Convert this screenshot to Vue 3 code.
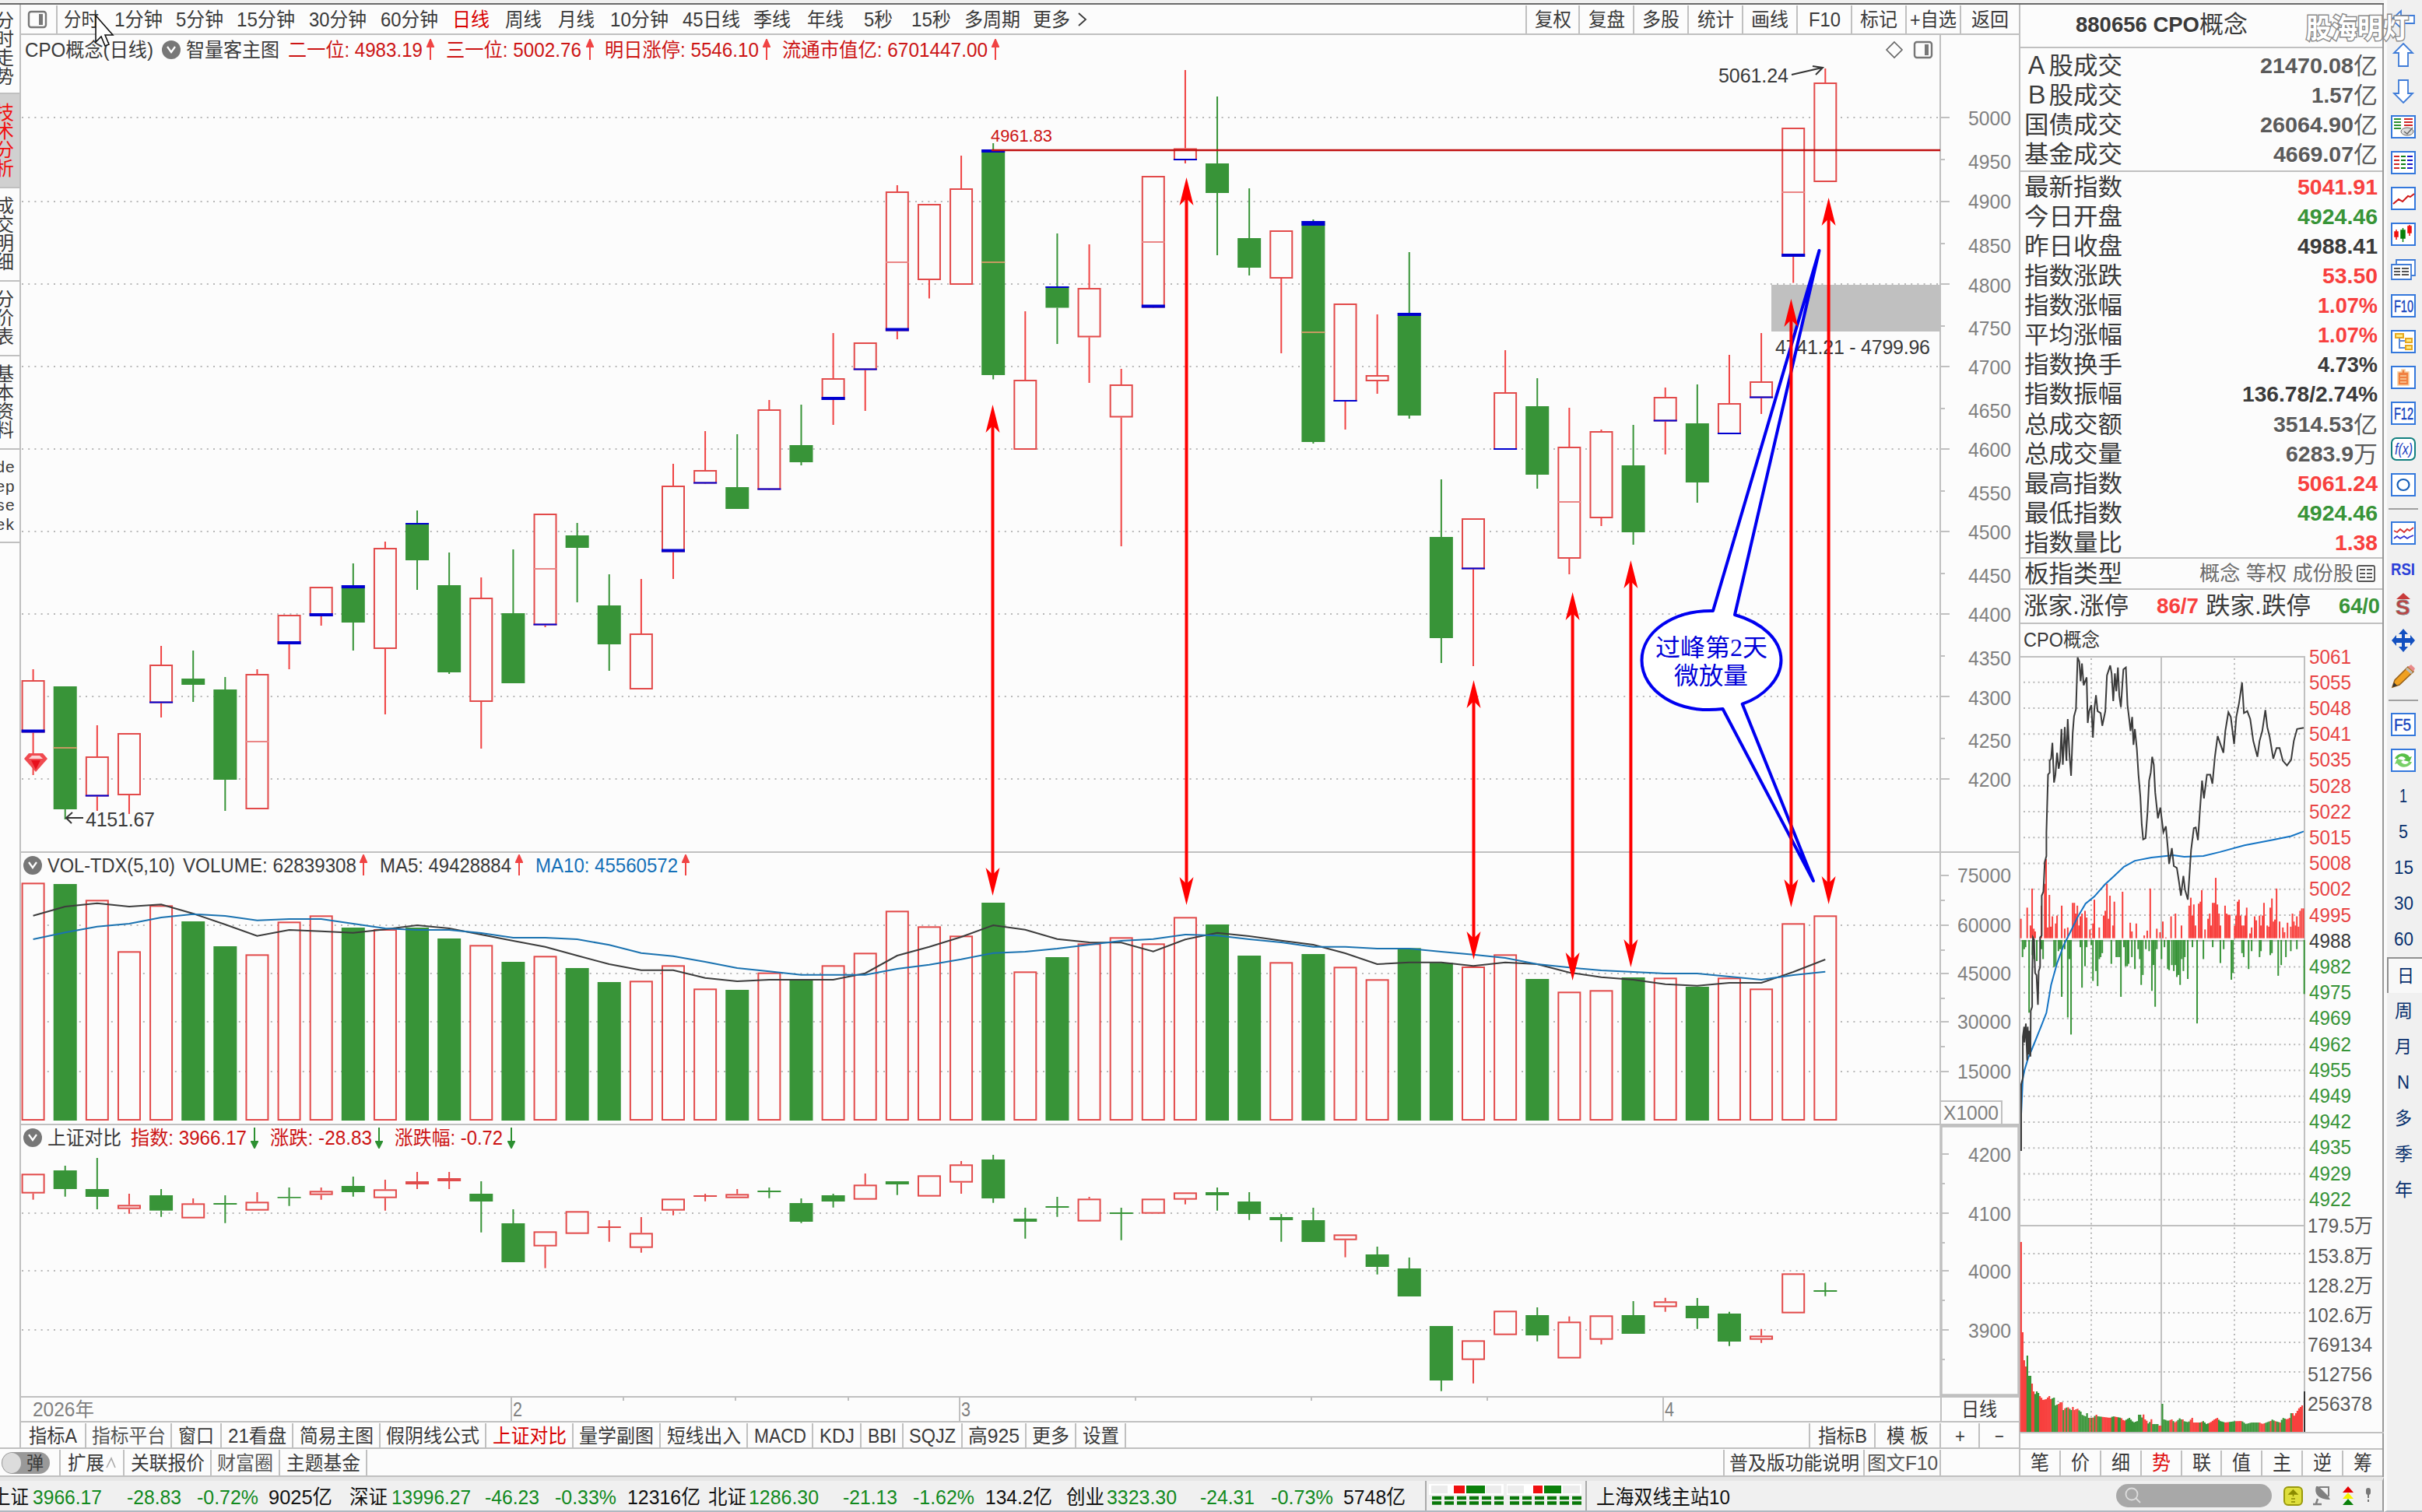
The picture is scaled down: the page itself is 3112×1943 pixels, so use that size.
<script setup>
import { h } from 'vue'

const FONT = '"Liberation Sans", "Noto Sans CJK SC", sans-serif'
const INK = '#3a3a3a'
const RED = '#cc1414'
const BLUE = '#1470b8'

// One line of text, fitted to an exact width and centred on its box height.
const Fit = (p) => {
  const s = p.s || 25
  const H = p.h || 32
  return h('svg', { class: 'fit', width: p.w, height: H }, [
    h('text', {
      x: 0, y: H / 2 + s * 0.365, fill: p.c || INK, 'font-size': s,
      'font-family': p.f || FONT, 'font-weight': p.b ? 700 : 400,
      textLength: p.w, lengthAdjust: 'spacingAndGlyphs'
    }, p.t)
  ])
}
Fit.props = ['t', 'w', 's', 'c', 'b', 'h', 'f']

// Turns start/end positions into gaps between neighbours.
const spread = (from, items) => {
  let at = from
  return items.map((it) => {
    const ml = it.x - at
    at = it.e
    return { ...it, ml, w: it.e - it.x }
  })
}

const periods = spread(74, [
  ['分时', 82, 127], ['1分钟', 147, 209], ['5分钟', 226, 287], ['15分钟', 304, 379], ['30分钟', 397, 471],
  ['60分钟', 489, 563], ['日线', 581, 629], ['周线', 649, 696], ['月线', 717, 764], ['10分钟', 784, 859],
  ['45日线', 877, 951], ['季线', 968, 1016], ['年线', 1037, 1084], ['5秒', 1110, 1147], ['15秒', 1171, 1222],
  ['多周期', 1239, 1311], ['更多', 1327, 1375]
].map(([t, x, e]) => ({ t, x, e })))

const tools = [
  ['复权', 68, 47], ['复盘', 70, 47], ['多股', 70, 48], ['统计', 70, 47], ['画线', 70, 48],
  ['F10', 70, 41], ['标记', 70, 48], ['+自选', 70, 60], ['返回', 76, 48]
]

const side = [
  { t: '分时走势', h: 115 }, { t: '技术分析', h: 121, on: true }, { t: '成交明细', h: 120 },
  { t: '分价表', h: 96 }, { t: '基本资料', h: 120 }
]

const head1 = spread(233, [
  { t: '智量客主图', x: 239, e: 359 },
  { t: '二一位: 4983.19', x: 370, e: 543, c: RED }, { a: 'up', x: 548, e: 558 },
  { t: '三一位: 5002.76', x: 573, e: 747, c: RED }, { a: 'up', x: 753, e: 763 },
  { t: '明日涨停: 5546.10', x: 777, e: 975, c: RED }, { a: 'up', x: 980, e: 990 },
  { t: '流通市值亿: 6701447.00', x: 1005, e: 1269, c: RED }, { a: 'up', x: 1274, e: 1284 }
])
const head2 = spread(54, [
  { t: 'VOL-TDX(5,10)', x: 61, e: 225 }, { t: 'VOLUME: 62839308', x: 235, e: 458 }, { a: 'up', x: 462, e: 472 },
  { t: 'MA5: 49428884', x: 488, e: 657 }, { a: 'up', x: 662, e: 672 },
  { t: 'MA10: 45560572', x: 688, e: 871, c: BLUE }, { a: 'up', x: 876, e: 886 }
])
const head3 = spread(54, [
  { t: '上证对比', x: 61, e: 156 }, { t: '指数: 3966.17', x: 168, e: 317, c: RED }, { a: 'down', x: 322, e: 332 },
  { t: '涨跌: -28.83', x: 347, e: 478, c: RED }, { a: 'down', x: 482, e: 492 },
  { t: '涨跌幅: -0.72', x: 507, e: 646, c: RED }, { a: 'down', x: 652, e: 662 }
])

const cx = (i) => 42.6 + 41.12 * i

// up, high, top, bottom, low, blue marker thickness, mid line
const daily = [
  [1, 861, 875, 942.5, 997, 4], [0, 883, 883, 1041, 1054, 0, 962], [1, 933, 973, 1024.5, 1043, 2], [1, 943, 943, 1023, 1047],
  [1, 831, 855, 904.5, 923, 2], [0, 837, 873, 881, 903], [0, 871, 887, 1003, 1043], [1, 861, 867, 1041, 1041, 0, 954],
  [1, 791, 791, 829, 861, 4], [1, 755, 755, 793, 805, 4], [0, 725, 753, 801, 837, 4], [1, 697, 705, 835, 919],
  [0, 657, 673, 721, 759, 2], [0, 711, 753, 865, 867], [1, 743, 769, 903, 963], [0, 707, 789, 879, 879],
  [1, 661, 661, 804.5, 807, 2, 732], [0, 673, 689, 705, 775], [0, 739, 779, 829, 863], [1, 745, 815, 887, 887],
  [1, 597, 625, 710.5, 745, 4], [1, 555, 605, 622.5, 622, 2], [0, 559, 627, 655, 655], [1, 515, 527, 630.5, 630, 2],
  [0, 521, 573, 595, 599], [1, 429, 487, 515, 547, 4], [1, 441, 441, 476.5, 529, 2], [1, 239, 247, 426.5, 437, 4, 338],
  [1, 263, 263, 361, 384.5], [1, 201, 243, 367, 367], [0, 185, 193, 483, 488.5, 4, 338], [1, 401, 489, 579, 579],
  [0, 301, 369, 396.5, 443, 2], [1, 315, 371, 434.5, 493], [1, 475, 495, 537.5, 703], [1, 227, 227, 396.5, 396, 4, 312],
  [1, 91, 191.5, 207, 211, 2], [0, 125, 211, 249, 329], [0, 243, 307, 345, 355], [1, 297, 297, 359, 455],
  [0, 283, 285, 569, 571, 6, 428], [1, 391, 391, 517, 553, 2], [1, 405, 483, 491, 507], [0, 325, 403, 535, 539, 4],
  [0, 617, 691, 821, 853], [1, 667, 667, 732.5, 857, 2], [1, 451, 505, 579, 579, 2], [0, 487, 523, 611, 629],
  [1, 525, 575, 719, 739, 0, 646], [1, 553, 555, 667, 677], [0, 547, 599, 685, 701], [1, 499, 511, 542.5, 585, 2],
  [0, 495, 545, 621, 647], [1, 457, 519, 559, 559, 2], [1, 429, 491, 512.5, 533, 2], [1, 165, 165, 331, 364.5, 4, 248],
  [1, 89, 107, 235, 235]
].map(([u, hi, t, b, lo, m = 0, mid = 0], i) => ({ u, hi, t, b, lo, m, mid, x: cx(i) }))

const vols = [
  [1, 166], [0, 171], [1, 232], [1, 430], [1, 253], [0, 315], [0, 411], [1, 442], [1, 316], [1, 292], [0, 339], [1, 345],
  [0, 339], [0, 381], [1, 406], [0, 471], [1, 448], [0, 495], [0, 549], [1, 544], [1, 484], [1, 574], [0, 579], [1, 512],
  [0, 540], [1, 484], [1, 436], [1, 274], [1, 334], [1, 370], [0, 243], [1, 508], [0, 453], [1, 400], [1, 376], [1, 400],
  [1, 298], [0, 327], [0, 447], [1, 472], [0, 441], [1, 490], [1, 538], [0, 418], [0, 475], [1, 489], [1, 442], [0, 537],
  [1, 586], [1, 580], [0, 531], [1, 532], [0, 567], [1, 532], [1, 574], [1, 322], [1, 292]
].map(([u, v], i) => ({ u, x: cx(i), y: 1080 + v / 3 }))

const curve = (vals) => vals.map((v, i) => `${cx(i).toFixed(1)},${(1080 + v / 3).toFixed(1)}`).join(' ')
const ma5 = curve([293, 258, 245, 258, 250, 285, 327, 371, 348, 353, 359, 346, 330, 342, 366, 390, 413, 447, 480, 503, 503, 533, 546, 540, 540, 540, 515, 447, 413, 375, 330, 347, 383, 396, 397, 431, 385, 359, 372, 389, 405, 438, 480, 473, 473, 487, 473, 480, 512, 530, 540, 557, 563, 552, 552, 510, 462])
const ma10 = curve([384, 358, 335, 324, 300, 287, 294, 311, 306, 306, 324, 342, 348, 348, 360, 378, 378, 384, 406, 437, 449, 471, 495, 508, 521, 521, 521, 498, 482, 461, 437, 432, 420, 405, 390, 383, 366, 370, 384, 396, 413, 413, 420, 420, 432, 443, 456, 480, 493, 504, 510, 516, 516, 528, 540, 522, 509])

// kind (1 hollow, 0 falling, 2 solid rising), high, top, bottom, low
const index = [
  [1, 238, 238, 314, 338], [0, 207, 225, 297, 326], [0, 177, 297, 327, 375], [1, 315, 358, 374, 392], [0, 297, 321, 380, 404],
  [1, 333, 352, 410, 410], [0, 321, 351, 357, 428], [1, 309, 346, 380, 380], [0, 291, 327, 332, 362], [1, 291, 304, 320, 338],
  [0, 249, 285, 309, 326], [1, 261, 298, 332, 380], [2, 231, 267, 279, 297], [2, 231, 255, 267, 297], [0, 267, 315, 345, 464],
  [0, 375, 429, 579, 579], [1, 460, 460, 518, 602], [1, 382, 382, 470, 470], [2, 417, 441, 447, 500], [1, 405, 466, 524, 542],
  [1, 334, 334, 380, 398], [2, 315, 321, 327, 344], [1, 297, 316, 332, 332], [0, 291, 303, 309, 332], [0, 333, 351, 423, 428],
  [0, 315, 321, 345, 368], [1, 237, 280, 338, 338], [0, 267, 267, 279, 320], [1, 244, 244, 326, 326], [1, 189, 202, 272, 315],
  [0, 165, 183, 333, 350], [0, 369, 411, 423, 488], [0, 327, 363, 369, 404], [1, 327, 334, 422, 422], [0, 369, 387, 393, 494],
  [1, 334, 334, 392, 392], [1, 310, 310, 338, 356], [0, 291, 309, 321, 380], [0, 309, 345, 393, 416], [0, 393, 405, 417, 500],
  [0, 369, 417, 501, 501], [1, 472, 472, 494, 560], [0, 519, 549, 597, 626], [0, 561, 603, 711, 711], [0, 825, 825, 1035, 1076],
  [1, 880, 880, 956, 1046], [1, 766, 766, 860, 860], [0, 753, 783, 861, 884], [1, 788, 808, 950, 950], [1, 784, 784, 878, 896],
  [0, 729, 783, 855, 855], [1, 716, 730, 752, 770], [0, 717, 747, 795, 836], [0, 770, 777, 885, 902], [1, 836, 862, 878, 890],
  [1, 622, 622, 776, 776], [0, 657, 687, 693, 710]
].map(([u, ...v], i) => {
  const [hi, t, b, lo] = v.map((n) => 1430 + n / 3)
  return { u, hi, t, b, lo, x: cx(i) }
})

const axis1 = [
  [5000, 152, 153], [4950, 206, 209], [4900, 260, 260], [4850, 314, 317], [4800, 366, 368], [4750, 420, 423], [4700, 472, 473],
  [4650, 526, 529], [4600, 578, 579], [4550, 632, 635], [4500, 684, 685], [4450, 738, 741], [4400, 790, 791], [4350, 844, 847],
  [4300, 896, 898], [4250, 950, 953], [4200, 1002, 1003]
].map(([n, y, ty], i) => ({ n, y, ty, major: i % 2 === 0 }))
const axis2 = [[75000, 1126], [60000, 1190], [45000, 1252], [30000, 1314], [15000, 1378]]
const axis3 = [[4200, 1484], [4100, 1560], [4000, 1634], [3900, 1710]]

const arrows = [
  [1275.5, 520, 1151], [1524.5, 228, 1163], [1893.5, 874, 1233], [2020.6, 761, 1260],
  [2095.4, 720, 1243], [2301.4, 384, 1166], [2349.6, 254, 1162]
]
const tip = (x, y, d) => `M${x},${y} L${x + 9},${y + 36 * d} L${x},${y + 27 * d} L${x - 9},${y + 36 * d} Z`

const tabs = [
  ['指标A', 84, 62], ['指标平台', 110, 95], ['窗口', 64, 46], ['21看盘', 92, 75], ['简易主图', 112, 95], ['假阴线公式', 136, 120],
  ['上证对比', 112, 95], ['量学副图', 112, 96], ['短线出入', 112, 95], ['MACD', 84, 67], ['KDJ', 62, 45], ['BBI', 54, 37],
  ['SQJZ', 76, 60], ['高925', 82, 66], ['更多', 64, 48], ['设置', 64, 47]
]
const tabsRight = [['指标B', 84, 63], ['模 板', 84, 54], ['+', 50, 13], ['−', 50, 12]]
const links = [['扩展', 82, 47], ['关联报价', 112, 95], ['财富圈', 88, 72], ['主题基金', 112, 95]]

const K = '#111'
const G = '#128a1e'
const quotes = spread(0, [
  ['上证', -10, 37, K], ['3966.17', 42, 131, G], ['-28.83', 163, 233, G], ['-0.72%', 253, 332, G], ['9025亿', 345, 427, K],
  ['深证', 449, 498, K], ['13996.27', 503, 605, G], ['-46.23', 623, 693, G], ['-0.33%', 713, 792, G], ['12316亿', 806, 900, K],
  ['北证', 910, 959, K], ['1286.30', 962, 1052, G], ['-21.13', 1083, 1153, G], ['-1.62%', 1173, 1252, G], ['134.2亿', 1266, 1352, K],
  ['创业', 1370, 1419, K], ['3323.30', 1422, 1512, G], ['-24.31', 1542, 1612, G], ['-0.73%', 1633, 1713, G], ['5748亿', 1726, 1806, K]
].map(([t, x, e, c]) => ({ t, x, e, c })))

const R = '#f8403e'
const GN = '#389438'
const GR = '#5a5a5a'
const turnover = [
  ['Ａ股成交', '21470.08', 120, GR, '亿'], ['Ｂ股成交', '1.57', 54, GR, '亿'],
  ['国债成交', '26064.90', 120, GR, '亿'], ['基金成交', '4669.07', 103, GR, '亿']
]
const stats = [
  ['最新指数', '5041.91', 103, R], ['今日开盘', '4924.46', 103, GN], ['昨日收盘', '4988.41', 103, INK], ['指数涨跌', '53.50', 71, R],
  ['指数涨幅', '1.07%', 77, R], ['平均涨幅', '1.07%', 77, R], ['指数换手', '4.73%', 77, INK], ['指数振幅', '136.78/2.74%', 174, INK],
  ['总成交额', '3514.53', 103, GR, '亿'], ['总成交量', '6283.9', 87, GR, '万'], ['最高指数', '5061.24', 103, R],
  ['最低指数', '4924.46', 103, GN], ['指数量比', '1.38', 55, R]
]

// Intraday chart
const mx = (v) => 2560 + v / 2.84
const my = (v) => 800 + v / 1.96
const path = (s) => s.split(' ').map((p) => { const [a, b] = p.split(','); return `${mx(+a).toFixed(1)},${my(+b).toFixed(1)}` }).join(' ')
const price = path('105,1333 105,1165 111,1150 111,1045 116,1020 117,1060 122,1012 127,1105 129,1020 132,1090 134,1030 139,1095 140,980 145,970 145,900 148,795 152,800 156,885 161,890 166,965 169,880 174,870 174,795 180,790 180,690 186,680 191,605 197,590 197,530 203,385 209,380 209,350 214,345 219,305 225,405 230,385 236,330 242,370 247,350 252,270 257,360 264,265 270,350 275,245 281,330 287,388 293,280 298,238 305,220 311,90 317,100 322,150 327,105 333,160 344,140 348,255 353,225 361,210 367,292 372,220 378,185 384,225 395,230 401,262 412,225 418,135 430,110 435,130 441,200 447,130 452,175 458,115 463,185 469,215 478,120 487,115 493,210 500,250 504,275 510,240 515,310 520,270 527,320 533,385 540,440 545,510 550,548 559,545 566,480 572,400 578,380 583,340 589,360 594,430 604,495 613,468 624,530 633,515 640,570 645,610 655,570 662,615 673,620 680,650 688,690 697,640 703,675 713,700 718,650 725,575 735,520 742,518 750,550 757,480 765,400 772,445 783,385 795,385 803,408 812,340 822,288 833,310 843,330 850,275 861,228 870,240 882,308 890,240 900,205 911,153 918,230 930,225 941,245 952,300 967,340 975,300 985,275 996,222 1003,265 1012,290 1025,345 1037,318 1048,318 1060,350 1075,362 1090,348 1100,300 1112,270 1136,267')
const average = path('105,1240 111,1150 118,1128 130,1100 145,1075 160,1050 180,1015 197,985 214,915 236,860 260,815 282,785 310,745 340,710 372,692 410,662 445,640 480,617 520,602 580,594 660,588 700,592 770,590 830,580 920,563 1020,550 1090,540 1136,528')
const pairs = (s) => s.split(' ').map((p) => p.split(':').map(Number))
const buys = pairs('104:748 127:720 139:765 145:672 151:773 156:780 179:715 191:660 196:598 202:770 208:688 213:768 219:742 231:760 236:740 253:715 264:773 275:770 293:708 299:708 304:735 310:715 316:765 321:742 327:735 338:728 344:745 356:775 367:760 372:700 390:770 406:740 412:728 418:660 424:748 429:690 440:765 445:705 475:680 503:758 509:780 525:760 554:790 565:778 576:672 600:773 612:782 622:755 633:795 652:742 668:735 690:765 718:715 724:695 730:740 735:712 741:765 753:710 759:705 764:676 776:775 787:748 793:735 798:765 804:708 810:708 815:645 821:712 827:735 832:765 849:715 855:735 861:738 866:738 884:765 889:740 895:705 900:700 906:740 911:765 917:765 923:740 928:720 940:785 946:770 957:742 963:752 975:740 980:765 986:740 991:708 1003:765 1009:768 1014:720 1020:697 1026:755 1031:750 1037:672 1048:755 1060:770 1066:782 1077:758 1089:768 1095:735 1100:755 1106:765 1111:742 1117:768 1123:728 1129:722 1135:722')
const sells = pairs('110:845 116:825 121:820 134:985 146:840 152:850 162:855 179:825 185:850 225:870 231:868 241:830 247:825 253:945 264:825 275:997 281:850 287:1040 321:820 327:922 338:868 344:820 361:815 367:905 378:880 384:918 390:850 395:845 401:835 434:862 452:845 458:845 464:845 469:945 480:820 486:868 492:868 497:862 509:845 520:875 532:825 538:850 543:915 549:890 560:825 572:830 582:930 588:865 594:970 600:825 617:850 628:820 640:875 645:878 655:865 662:880 668:865 673:895 679:890 685:915 691:850 697:880 702:845 713:900 730:820 747:1012 770:850 804:820 832:860 844:825 872:902 878:885 911:835 917:845 935:875 946:830 975:845 980:830 1014:840 1020:835 1043:892 1054:865 1071:845 1089:830 1111:825 1138:938')

const envelope = pairs('104:171 110:519 116:627 122:651 127:609 133:687 139:687 145:717 150:747 156:757 162:747 168:753 174:765 185:780 196:777 207:765 213:777 224:771 230:801 242:795 250:789 258:819 264:813 275:807 287:819 293:807 300:819 310:813 321:825 327:837 338:843 344:831 350:849 367:849 378:837 384:843 430:849 440:843 470:849 480:861 500:849 515:867 530:861 538:837 545:849 554:831 560:855 570:873 583:849 588:873 605:873 612:879 617:879 622:795 628:855 640:861 655:855 665:867 675:860 685:849 692:855 700:862 715:866 729:849 735:867 760:867 770:861 780:873 795:867 810:855 821:849 830:861 850:867 885:862 910:861 925:873 945:867 975:867 985:873 1000:867 1015:861 1020:855 1030:861 1050:867 1060:849 1075:855 1085:849 1093:831 1100:843 1111:825 1122:807 1130:801')
const greens = pairs('124:142 153:172 219:240 258:262 270:275 282:290 313:352 361:365 372:376 384:402 432:448 455:470 486:550 566:576 582:608 616:648 658:662 672:690 697:718 735:740 757:762 768:790 825:845 862:885 912:972 995:1015 1020:1030 1038:1045 1055:1070 1085:1092')
const minutes = Array.from({ length: 180 }, (_, i) => {
  const x = 104.5 + i * 5.73
  let k = envelope.findIndex(([ex]) => ex > x)
  if (k < 1) k = k < 0 ? envelope.length - 1 : 1
  const [a, b] = [envelope[k - 1], envelope[k]]
  const near = x - a[0] < b[0] - x ? a : b
  const v = b[0] - a[0] < 9 ? near[1] : a[1] + (b[1] - a[1]) * (x - a[0]) / (b[0] - a[0])
  return { x: mx(x), y: 1540 + v / 3, g: greens.some(([s, e]) => x >= s && x <= e) }
})
const mgrid = Array.from({ length: 21 }, (_, i) => 844.5 + 33.25 * (i + 1)).filter((_, i) => i !== 10)
const scale = [5061, 5055, 5048, 5041, 5035, 5028, 5022, 5015, 5008, 5002, 4995, 4988, 4982, 4975, 4969, 4962, 4955, 4949, 4942, 4935, 4929, 4922]
const vscale = [['179.5万', 1576], ['153.8万', 1615], ['128.2万', 1653], ['102.6万', 1691], ['769134', 1729], ['512756', 1767], ['256378', 1805]]
const views = ['笔', '价', '细', '势', '联', '值', '主', '逆', '筹']

const rail = [
  'left', 'up', 'down', 'sheet', 'table', 'trend', 'kline', 'windows', 'F10', 'tree', 'info', 'F12', 'fx', 'ring', '-',
  'waves', 'RSI', 'S', 'move', 'pencil', '-', 'F5', 'refresh'
]
const railText = [['1', 10], ['5', 12], ['15', 25], ['30', 25], ['60', 25], ['日', 22], ['周', 23], ['月', 22], ['N', 16], ['多', 22], ['季', 23], ['年', 23]]
</script>

<template>
  <div class="app">
    <div class="strip"></div>
    <div class="body">
      <div class="work">
        <div class="upper">
          <nav class="side">
            <div v-for="s in side" :key="s.t" class="side-tab" :class="{ on: s.on }" :style="{ height: s.h + 'px' }">
              <span v-for="ch in s.t" :key="ch">{{ ch }}</span>
            </div>
            <div class="side-tab latin"><span>de</span><span>ep</span><span>se</span><span>ek</span></div>
          </nav>

          <div class="main">
            <header class="toolbar">
              <div class="dock">
                <svg width="26" height="24" viewBox="0 0 26 24"><rect x="2" y="2" width="22" height="20" rx="3" fill="none" stroke="#777" stroke-width="2.4" /><rect x="15" y="5" width="5" height="14" fill="#777" /></svg>
              </div>
              <Fit v-for="p in periods" :key="p.t" :t="p.t" :w="p.w" :c="p.t === '日线' ? '#d80000' : INK" :style="{ marginLeft: p.ml + 'px' }" />
              <svg class="chev" width="14" height="20" viewBox="0 0 14 20"><path d="M2 2l9 8-9 8" fill="none" stroke="#3a3a3a" stroke-width="1.8" /></svg>
              <div class="tools">
                <div v-for="t in tools" :key="t[0]" class="tool" :style="{ width: t[1] + 'px' }"><Fit :t="t[0]" :w="t[2]" /></div>
              </div>
            </header>

            <section class="panel">
              <div class="head">
                <Fit class="first" t="CPO概念(日线)" :w="165" />
                <svg class="fold late" width="24" height="24" viewBox="0 0 24 24"><circle cx="12" cy="12" r="12" fill="#777" /><path d="M7 8l5 7 5-7" fill="none" stroke="#fff" stroke-width="2.2" /></svg>
                <template v-for="(p, i) in head1" :key="i">
                  <Fit v-if="p.t" :t="p.t" :w="p.w" :c="p.c" :style="{ marginLeft: p.ml + 'px' }" />
                  <svg v-else width="10" height="28" viewBox="0 0 10 28" :style="{ marginLeft: p.ml + 'px' }"><path d="M5 27V8M5 1L1 10h8z" fill="#f04444" stroke="#f04444" stroke-width="2" /></svg>
                </template>
                <svg class="corner" width="66" height="26" viewBox="0 0 66 26"><path d="M12 3l10 10-10 10L2 13z" fill="none" stroke="#666" stroke-width="1.6" /><rect x="38" y="3" width="22" height="20" rx="3" fill="none" stroke="#777" stroke-width="2.4" /><rect x="51" y="6" width="5" height="14" fill="#777" /></svg>
              </div>
              <svg class="plot" width="2568" height="1012" viewBox="27 84 2568 1012">
                <g class="dots"><path v-for="a in axis1.filter(a => a.major)" :key="a.n" :d="`M28,${a.y}H2491`" /></g>
                <path d="M2493,46V1096" class="axis" />
                <g v-for="a in axis1" :key="a.n">
                  <path class="tick" :d="`M2494,${a.y}h${a.major ? 11 : 5}`" />
                  <text class="num" x="2529" :y="a.ty + 9" textLength="55" lengthAdjust="spacingAndGlyphs">{{ a.n }}</text>
                </g>
                <rect x="2276" y="367" width="217" height="60" fill="#c0c0c0" />
                <g v-for="(c, i) in daily" :key="i">
                  <path :d="`M${c.x},${c.hi}V${c.t}M${c.x},${c.b}V${c.lo}`" :stroke="c.u ? '#f04343' : '#389438'" stroke-width="2" />
                  <rect v-if="c.u" :x="c.x - 14" :y="c.t + 1" width="28" :height="c.b - c.t - 2" class="hollow" />
                  <rect v-else :x="c.x - 15" :y="c.t" width="30" :height="c.b - c.t" class="solid" />
                  <rect v-if="c.m" :x="c.x - 15" :y="c.u ? c.b - c.m : c.t" width="30" :height="c.m" fill="#0000d0" />
                  <path v-if="c.mid" :d="`M${c.x - 15},${c.mid}h30`" :stroke="c.u ? '#ea8585' : '#c69a62'" stroke-width="2" />
                </g>
                <path d="M1274,194H2493" stroke="#c01010" stroke-width="2.4" />
                <text x="1273" y="183" fill="#cc1414" font-size="22" textLength="79" lengthAdjust="spacingAndGlyphs">4961.83</text>
                <text class="note" x="2208" y="107" textLength="90">5061.24</text>
                <path class="pointer" d="M2302,97L2341,88M2329,86L2342,88L2333,97" />
                <text class="note" x="110" y="1063" textLength="89">4151.67</text>
                <path class="pointer" d="M107,1052H85M93,1045L85,1052L92,1059" />
                <g transform="translate(46 980)">
                  <path d="M-15,-4L-9,-11H9L15,-4L0,13Z" fill="#f04a50" /><path d="M-9,-4L-5,-8H5L9,-4Z" fill="#fff" opacity=".75" /><path d="M-6,-2L0,10L6,-2" fill="#e8101c" />
                </g>
                <text class="note" x="2281" y="456" textLength="199">4741.21 - 4799.96</text>
              </svg>
            </section>

            <section class="panel vol">
              <div class="head">
                <svg class="fold" width="24" height="24" viewBox="0 0 24 24"><circle cx="12" cy="12" r="12" fill="#777" /><path d="M7 8l5 7 5-7" fill="none" stroke="#fff" stroke-width="2.2" /></svg>
                <template v-for="(p, i) in head2" :key="i">
                  <Fit v-if="p.t" :t="p.t" :w="p.w" :c="p.c" :style="{ marginLeft: p.ml + 'px' }" />
                  <svg v-else width="10" height="28" viewBox="0 0 10 28" :style="{ marginLeft: p.ml + 'px' }"><path d="M5 27V8M5 1L1 10h8z" fill="#f04444" stroke="#f04444" stroke-width="2" /></svg>
                </template>
              </div>
              <svg class="plot" width="2568" height="315" viewBox="27 1128 2568 315">
                <g class="dots"><path v-for="a in axis2.slice(1)" :key="a[0]" :d="`M28,${a[1]}H2491`" /></g>
                <path d="M2493,1096V1446" class="axis" />
                <g v-for="a in axis2" :key="a[0]">
                  <path class="tick" :d="`M2494,${a[1]}h10`" />
                  <text class="num" x="2515" :y="a[1] + 9" textLength="69" lengthAdjust="spacingAndGlyphs">{{ a[0] }}</text>
                </g>
                <path class="tick" d="M2494,1158h5M2494,1222h5M2494,1284h5M2494,1346h5" />
                <g v-for="(b, i) in vols" :key="i">
                  <rect v-if="b.u" :x="b.x - 14" :y="b.y + 1" width="28" :height="1440 - b.y - 1" class="hollow" />
                  <rect v-else :x="b.x - 15" :y="b.y" width="30" :height="1441 - b.y" class="solid" />
                </g>
                <polyline :points="ma5" fill="none" stroke="#3c3c3c" stroke-width="2" />
                <polyline :points="ma10" fill="none" stroke="#1a72b0" stroke-width="2" />
                <path d="M2494,1416H2572V1446" fill="none" stroke="#c0c0c0" stroke-width="2" />
                <text class="num" x="2497" y="1440" textLength="71" lengthAdjust="spacingAndGlyphs">X1000</text>
              </svg>
            </section>

            <section class="panel idx">
              <div class="head">
                <svg class="fold" width="24" height="24" viewBox="0 0 24 24"><circle cx="12" cy="12" r="12" fill="#777" /><path d="M7 8l5 7 5-7" fill="none" stroke="#fff" stroke-width="2.2" /></svg>
                <template v-for="(p, i) in head3" :key="i">
                  <Fit v-if="p.t" :t="p.t" :w="p.w" :c="p.c" :style="{ marginLeft: p.ml + 'px' }" />
                  <svg v-else width="10" height="28" viewBox="0 0 10 28" :style="{ marginLeft: p.ml + 'px' }"><path d="M5 1v19M5 27L1 19h8z" fill="#2d9032" stroke="#2d9032" stroke-width="2" /></svg>
                </template>
              </div>
              <svg class="plot" width="2568" height="315" viewBox="27 1478 2568 315">
                <g class="dots"><path v-for="a in axis3.slice(1)" :key="a[0]" :d="`M28,${a[1]}H2491`" /></g>
                <rect x="2494" y="1448" width="100" height="346" fill="none" stroke="#c0c0c0" stroke-width="3.5" />
                <g v-for="a in axis3" :key="a[0]">
                  <path class="tick" :d="`M2494,${a[1]}h10`" />
                  <text class="num" x="2529" :y="a[1] + 9.5" textLength="55" lengthAdjust="spacingAndGlyphs">{{ a[0] }}</text>
                </g>
                <path class="tick" d="M2494,1522h5M2494,1598h5M2494,1672h5M2494,1748h5" />
                <g v-for="(c, i) in index" :key="i">
                  <path :d="`M${c.x},${c.hi}V${c.t}M${c.x},${c.b}V${c.lo}`" :stroke="c.u ? '#e84848' : '#389438'" stroke-width="2" />
                  <rect v-if="c.u === 1" :x="c.x - 14" :y="c.t + 1" width="28" :height="c.b - c.t - 2" class="hollow" />
                  <rect v-else :x="c.x - 15" :y="c.t" width="30" :height="c.b - c.t" :fill="c.u ? '#e04c4c' : '#389438'" />
                </g>
              </svg>
            </section>

            <div class="timeline">
              <svg width="2466" height="30" viewBox="27 1798 2466 30">
                <path d="M657,1798V1828M1233,1798V1828M2137,1798V1828M801,1798v4M945,1798v4M1090,1798v4M1459,1798v4M1685,1798v4M1911,1798v4" stroke="#c0c0c0" stroke-width="2" />
                <text class="num" x="42" y="1822" textLength="79" lengthAdjust="spacingAndGlyphs">2026年</text>
                <text class="num" x="659" y="1822" textLength="12" lengthAdjust="spacingAndGlyphs">2</text><text class="num" x="1235" y="1822" textLength="12" lengthAdjust="spacingAndGlyphs">3</text><text class="num" x="2139" y="1822" textLength="12" lengthAdjust="spacingAndGlyphs">4</text>
              </svg>
              <div class="mode"><Fit t="日线" :w="46" /></div>
            </div>
            <div class="row tabs">
              <div v-for="t in tabs" :key="t[0]" class="cell" :style="{ width: t[1] + 'px' }"><Fit :t="t[0]" :w="t[2]" :c="t[0] === '上证对比' ? '#d80000' : t[0] === '指标平台' ? '#555' : INK" /></div>
              <div class="grow"></div>
              <div v-for="t in tabsRight" :key="t[0]" class="cell" :style="{ width: t[1] + 'px' }"><Fit :t="t[0]" :w="t[2]" /></div>
            </div>
          </div>
        </div>

        <div class="row extra">
          <div class="pop cell"><div class="toggle"><i></i><Fit t="弹" :w="22" :h="26" :s="23" /></div></div>
          <div v-for="t in links" :key="t[0]" class="cell" :style="{ width: t[1] + 'px' }">
            <Fit :t="t[0]" :w="t[2]" :c="t[0] === '财富圈' ? '#555' : INK" />
            <svg v-if="t[0] === '扩展'" width="16" height="16" viewBox="0 0 16 16"><path d="M3 14L9 2l5 12" fill="none" stroke="#aaa" stroke-width="1.6" /></svg>
          </div>
          <div class="grow"></div>
          <div class="cell manual"><Fit t="普及版功能说明" :w="167" /></div>
          <div class="cell f10"><Fit t="图文F10" :w="91" c="#555" /></div>
          <div class="cell blank"></div>
        </div>
      </div>

      <aside class="info">
        <h1><Fit t="880656 CPO" :w="159" :s="28" b="1" :h="40" /><Fit t="概念" :w="62" :s="31" :h="40" /></h1>
        <dl class="group g1">
          <div v-for="r in turnover" :key="r[0]" class="stat">
            <dt><Fit :t="r[0]" :w="126" :s="31" :h="38" /></dt>
            <dd><Fit :t="r[1]" :w="r[2]" :c="r[3]" b="1" :s="27" :h="38" /><Fit v-if="r[4]" :t="r[4]" :w="31" :c="r[3]" :s="30" :h="38" /></dd>
          </div>
        </dl>
        <dl class="group g2">
          <div v-for="r in stats" :key="r[0]" class="stat">
            <dt><Fit :t="r[0]" :w="126" :s="31" :h="38" /></dt>
            <dd><Fit :t="r[1]" :w="r[2]" :c="r[3]" b="1" :s="27" :h="38" /><Fit v-if="r[4]" :t="r[4]" :w="31" :c="r[3]" :s="30" :h="38" /></dd>
          </div>
        </dl>
        <div class="stat kind">
          <Fit t="板指类型" :w="126" :s="31" :h="38" />
          <div class="tail"><Fit t="概念 等权 成份股" :w="198" :s="26" c="#6c6c6c" :h="38" />
            <svg width="24" height="22" viewBox="0 0 24 22"><rect x="1" y="1" width="22" height="20" rx="2" fill="none" stroke="#555" stroke-width="1.8" /><path d="M4 6h7M4 11h7M4 16h7M13 6h7M13 11h7M13 16h7" stroke="#555" stroke-width="2" /></svg></div>
        </div>
        <div class="stat breadth">
          <Fit t="涨家.涨停" :w="135" :s="31" :h="40" /><Fit class="b1" t="86/7" :w="54" :s="27" :h="40" b="1" c="#f8403e" />
          <Fit class="b2" t="跌家.跌停" :w="135" :s="31" :h="40" /><Fit class="b3" t="64/0" :w="53" :s="27" :h="40" b="1" c="#389438" />
        </div>
        <div class="sub"><Fit t="CPO概念" :w="98" :s="25" :h="40" /></div>
        <svg class="mini" width="467" height="1018" viewBox="2596 844 467 1018">
          <g class="dots mini-dots">
            <path v-for="y in mgrid" :key="y" :d="`M2600,${y}H2960`" />
            <path v-for="n in 6" :key="n" :d="`M2600,${1574 + 38 * n}H2960`" />
            <path d="M2687,847V1840M2871,847V1840" />
          </g>
          <path d="M2596,845H2962M2777,845V1842M2596,1210H2962M2596,1576H2962M2961,845V1842M2596,1842H3063" fill="none" stroke="#c0c0c0" stroke-width="2" />
          <rect v-for="b in buys" :key="b[0]" :x="mx(b[0]) - 1" :y="my(b[1])" width="2" :height="(797 - b[1]) / 1.96" fill="#f8403e" />
          <rect v-for="b in sells" :key="b[0]" :x="mx(b[0]) - 1" y="1209" width="2" :height="(b[1] - 802) / 1.96" fill="#389438" />
          <polyline :points="average" fill="none" stroke="#1474c4" stroke-width="2" />
          <polyline :points="price" fill="none" stroke="#3a3a3a" stroke-width="2" />
          <rect v-for="(m, i) in minutes" :key="i" :x="m.x - 1.05" :y="m.y" width="2.2" :height="1841 - m.y" :fill="m.g ? '#389438' : '#f8403e'" />
          <path d="M2961,1789V1841" stroke="#333" stroke-width="2" />
          <text v-for="(s, i) in scale" :key="s" x="2967" :y="853.5 + 33.2 * i" font-size="26" textLength="54" lengthAdjust="spacingAndGlyphs" :fill="i < 11 ? '#e84444' : i === 11 ? '#3a3a3a' : '#389438'">{{ s }}</text>
          <text v-for="s in vscale" :key="s[0]" x="2965" :y="s[1] + 9" font-size="26" :textLength="s[0][3] === '.' ? 84 : 83" lengthAdjust="spacingAndGlyphs" fill="#5a5a5a">{{ s[0] }}</text>
        </svg>
        <div class="views"><div v-for="v in views" :key="v" :class="{ on: v === '势' }"><Fit :t="v" :w="24" :s="26" :c="v === '势' ? '#e01010' : INK" /></div></div>
      </aside>
    </div>

    <footer class="status">
      <div class="quotes"><Fit v-for="(q, i) in quotes" :key="i" :t="q.t" :w="q.w" :c="q.c" :s="26" :style="{ marginLeft: q.ml + 'px' }" /></div>
      <svg class="meter" width="208" height="38" viewBox="1831 1903 208 38">
        <path d="M1832,1903V1941M2038,1903V1941" stroke="#aaa" stroke-width="2" />
        <path d="M1836,1907h96v14h-96zM1936,1907h96v14h-96z" fill="#fff" />
        <path d="M1839,1909h21v10h-21zM1909,1909h20v10h-20zM1937,1909h21v10h-21zM2008,1909h22v10h-22z" fill="#ececec" />
        <path d="M1868,1909h14v10h-14zM1970,1909h12v10h-12z" fill="#f01010" />
        <path d="M1884,1909h24v10h-24zM1984,1909h22v10h-22z" fill="#0a800a" />
        <path d="M1840,1925H1934M1840,1931.500H1934M1940,1925H2034M1940,1931.500H2034" stroke="#0a780a" stroke-width="4.500" stroke-dasharray="12 4" />
      </svg>
      <div class="host"><Fit t="上海双线主站10" :w="172" :s="26" c="#111" /></div>
      <div class="search"><svg width="26" height="24" viewBox="0 0 26 24"><circle cx="10" cy="10" r="7.500" fill="none" stroke="#ddd" stroke-width="1.800" /><path d="M15 15l6 6" stroke="#ddd" stroke-width="1.800" /></svg></div>
      <svg class="tray" width="120" height="28" viewBox="2930 1907 120 28">
        <rect x="2935" y="1910" width="23" height="23" rx="5" fill="#dede3c" stroke="#99990c" stroke-width="2" /><path d="M2946.500,1914l5,5h-10zM2946.500,1918v4M2944,1925h5M2944,1929h5" fill="#8a8a00" stroke="#8a8a00" stroke-width="1.600" />
        <path d="M2976,1909c-3,10 3,17 18,17l-3,-5l-12,-12z" fill="#808080" /><path d="M2980,1910h12v12" fill="none" stroke="#808080" stroke-width="2" /><path d="M2985,1912h5v6z" fill="#f4f4f4" /><path d="M2978,1925l-2,6M2972,1932h11" stroke="#808080" stroke-width="2.500" />
        <path d="M3017,1909l7,8h-14z" fill="#e60000" /><path d="M3017,1917l7,8h-14z" fill="#f4f400" /><path d="M3017,1925l7,8h-14z" fill="#0a800a" />
        <path d="M3043,1914v3" stroke="#777" stroke-width="6" stroke-linecap="round" /><path d="M3043,1918v6M3043,1926v3" stroke="#777" stroke-width="2" />
      </svg>
    </footer>

    <aside class="rail">
      <template v-for="(r, i) in rail" :key="i">
        <hr v-if="r === '-'">
        <div v-else class="btn">
          <svg width="32" height="32" viewBox="0 0 32 32">
            <path v-if="r === 'left'" d="M1 16L13 5v6h17v10H13v6z" fill="#fff" stroke="#3f7cd8" stroke-width="1.800" />
            <path v-else-if="r === 'up'" d="M16 1L28 13h-6v17H10V13H4z" fill="#fff" stroke="#3f7cd8" stroke-width="1.800" />
            <path v-else-if="r === 'down'" d="M16 31L28 19h-6V2H10v17H4z" fill="#fff" stroke="#3f7cd8" stroke-width="1.800" />
            <template v-else-if="['RSI', 'S', 'move', 'pencil'].includes(r)">
              <text v-if="r === 'RSI'" x="0" y="24" font-size="22" font-weight="700" textLength="31" lengthAdjust="spacingAndGlyphs" fill="#2a40d8">RSI</text>
              <template v-else-if="r === 'S'"><path d="M7 9L16 1l9 8z" fill="#c83a3a" /><text x="6" y="29" font-size="28" font-weight="700" fill="#c04040" stroke="#888" stroke-width=".8">S</text></template>
              <path v-else-if="r === 'move'" d="M16 1l6 7h-4v5h7v-4l6 7-6 7v-4h-7v5h4l-6 7-6-7h4v-5H7v4l-6-7 6-7v4h7V8h-4z" fill="#1350c0" />
              <template v-else><path d="M2 30l3-9L22 4l7 6L11 27z" fill="#f0a020" stroke="#96601a" stroke-width="1.500" /><path d="M22 4l4-3 5 5-2 4z" fill="#e88a8a" /><path d="M2 30l2-6 4 4z" fill="#333" /><path d="M20 6l7 6" stroke="#bbb" stroke-width="3" /></template>
            </template>
            <template v-else>
              <path v-if="r === 'windows'" d="M7 9V3h24v20h-5M1 9h25v19H1z" fill="#fff" stroke="#3f7cd8" stroke-width="1.800" />
              <rect v-else x="1" y="2" width="30" height="28" :rx="r === 'fx' ? 6 : 0" fill="#fff" :stroke="r === 'fx' ? '#128080' : '#3478dc'" stroke-width="2" />
              <template v-if="r === 'sheet'"><path d="M4 6h9M4 10h9M4 14h9M4 18h9" stroke="#2c9030" stroke-width="2" /><path d="M17 6h11M17 10h11M17 14h11" stroke="#d02828" stroke-width="2" /><ellipse cx="21" cy="22" rx="8" ry="5" fill="#ddd" stroke="#666" /><path d="M17 22l4 3 7-8" fill="none" stroke="#666" stroke-width="1.500" /></template>
              <template v-else-if="r === 'table'"><path d="M4 8h7M4 13h7M4 18h7M4 23h7" stroke="#d02828" stroke-width="2" /><path d="M13 8h6M13 13h6M13 18h6M13 23h6" stroke="#108018" stroke-width="2" /><path d="M21 8h7M21 13h7M21 18h7M21 23h7" stroke="#1818c8" stroke-width="2" /></template>
              <path v-else-if="r === 'trend'" d="M3 23l7-6 5 3 7-7 3 1 5-4" fill="none" stroke="#d01818" stroke-width="2" />
              <template v-else-if="r === 'kline'"><path d="M7 10v13M5 13h4v6H5zM24 4v14M22 6h4v8h-4z" fill="#f01010" stroke="#f01010" stroke-width="1.500" /><path d="M15.500 8v18M13 11h5v10h-5z" fill="#0a800a" stroke="#0a800a" stroke-width="1.500" /></template>
              <path v-else-if="r === 'windows'" d="M4 14h8M14 14h9M4 18h8M14 18h9M4 22h8M14 22h9" stroke="#555" stroke-width="2" />
              <template v-else-if="r === 'tree'"><path d="M11 8v16h8M11 15h8" fill="none" stroke="#5a8ad8" stroke-width="2" /><path d="M6 6h10v5H6zM19 12h8v5h-8zM19 21h8v5h-8z" fill="#ffec80" stroke="#e8a820" stroke-width="2" /></template>
              <path v-else-if="r === 'info'" d="M14 6h4v3h5v17H9V9h5zM12 14h8M12 18h8M12 22h8" fill="#f08040" stroke="#f8d0a0" stroke-width="1.600" />
              <ellipse v-else-if="r === 'ring'" cx="16" cy="16" rx="7.500" ry="7" fill="none" stroke="#1860b8" stroke-width="2.200" />
              <template v-else-if="r === 'waves'"><path d="M4 13l4 2 4-4 5 4 4-4 3 2 5-4" fill="none" stroke="#d83030" stroke-width="1.800" /><path d="M4 23l4-3 4 3 5-3 4 3 3-2 5-2" fill="none" stroke="#3030d0" stroke-width="1.800" /></template>
              <template v-else-if="r === 'refresh'"><path d="M5 14c3-8 15-9 19-2l3-1-3 7-8-2 3-2c-3-4-8-4-10 0z" fill="#58c048" /><path d="M27 18c-3 8-15 9-19 2l-3 1 3-7 8 2-3 2c3 4 8 4 10 0z" fill="#78d068" /></template>
              <text v-else-if="r === 'fx'" x="5" y="23" font-size="21" font-style="italic" textLength="23" lengthAdjust="spacingAndGlyphs" fill="#1840c0">f(x)</text>
              <text v-else-if="r[0] === 'F'" x="4" :y="24" font-size="22" :textLength="r === 'F5' ? 22 : 25" lengthAdjust="spacingAndGlyphs" fill="#1846c0" stroke="#1846c0" stroke-width=".5">{{ r }}</text>
            </template>
          </svg>
        </div>
      </template>
      <div v-for="r in railText" :key="r[0]" class="btn" :class="{ on: r[0] === '日' }"><Fit :t="r[0]" :w="r[1]" :s="23" c="#08306e" /></div>
    </aside>

    <svg class="marks" width="2568" height="1250" viewBox="27 46 2568 1250">
      <g fill="#fff" stroke="#0000f0" stroke-width="4" stroke-linejoin="round">
        <path d="M2201,785L2337.500,322L2229,790C2264,800 2288.500,822 2288.500,848.500C2288.500,872 2267,895 2238.700,904.700L2330,1132L2213.600,911C2155,918 2109.500,888 2109.500,848.500C2109.500,812 2150,784 2201,785Z" />
      </g>
      <text class="call" x="2127" y="843" textLength="144" lengthAdjust="spacingAndGlyphs">过峰第2天</text>
      <text class="call" x="2151" y="879" textLength="95" lengthAdjust="spacingAndGlyphs">微放量</text>
      <g v-for="a in arrows" :key="a[0]">
        <path :d="`M${a[0]},${a[1] + 20}V${a[2] - 20}`" stroke="#ff0000" stroke-width="4" />
        <path :d="tip(a[0], a[1], 1)" fill="#ff0000" /><path :d="tip(a[0], a[2], -1)" fill="#ff0000" />
      </g>
    </svg>
    <svg class="brand" width="140" height="44" viewBox="0 0 140 44"><text x="4" y="35" font-size="35" font-weight="700" textLength="132" lengthAdjust="spacingAndGlyphs">股海明灯</text></svg>
    <svg class="cursor" width="28" height="42" viewBox="0 0 28 42"><path d="M2 1v34l7-7 5 12 5-2-5-12h10z" fill="#fff" stroke="#111" stroke-width="1.600" /></svg>
  </div>
</template>

<style>
body { background: #f0f0f0; overflow: hidden; }
</style>

<style scoped>
.app { position: relative; width: 3112px; height: 1943px; background: #fcfcfc; overflow: hidden; font-family: "Liberation Sans", "Noto Sans CJK SC", sans-serif; color: #3a3a3a; display: grid; grid-template-columns: 3063px 49px; grid-template-rows: 6px 1892px 45px; box-sizing: border-box; }
svg { display: block; flex: none; }
.fit { overflow: visible; }
text { font-family: "Liberation Sans", "Noto Sans CJK SC", sans-serif; }
.strip { grid-column: 1; grid-row: 1; background: #f0f0f0; border-bottom: 2px solid #6a6a6a; box-sizing: border-box; }
.body { grid-column: 1; grid-row: 2; display: flex; }
.work { width: 2596px; flex: none; display: flex; flex-direction: column; border-right: 2px solid #c0c0c0; box-sizing: border-box; }
.upper { display: flex; height: 1856px; }
.side { width: 27px; flex: none; overflow: hidden; border-right: 2px solid #c0c0c0; border-bottom: 2px solid #c0c0c0; box-sizing: border-box; }
.side-tab { box-sizing: border-box; border-bottom: 2px solid #c0c0c0; display: flex; flex-direction: column; justify-content: center; }
.side-tab span { font-size: 24px; line-height: 24px; width: 24px; margin-left: -6px; }
.side-tab.on { background: #d0d0d0; color: #f01010; }
.side-tab.latin { height: 120px; padding-top: 4px; }
.side-tab.latin span { font-family: "Liberation Mono", monospace; font-size: 21px; line-height: 24.5px; }
.main { width: 2567px; flex: none; display: flex; flex-direction: column; }
.toolbar { height: 40px; box-sizing: border-box; border-bottom: 2px solid #c0c0c0; display: flex; align-items: center; padding-top: 1px; }
.dock { width: 47px; height: 100%; box-sizing: border-box; border-right: 2px solid #c0c0c0; display: flex; align-items: center; padding-left: 8px; }
.chev { margin-left: 9px; }
.tools { margin-left: auto; display: flex; height: 100%; }
.tool { box-sizing: border-box; border-left: 2px solid #c0c0c0; display: flex; align-items: center; justify-content: center; }
.panel { border-bottom: 2px solid #c0c0c0; box-sizing: border-box; height: 1051px; flex: none; }
.panel.vol, .panel.idx { height: 350px; }
.head { height: 38px; display: flex; align-items: center; }
.vol .head, .idx .head { height: 31px; padding-top: 1px; box-sizing: border-box; }
.first { margin-left: 5px; }
.fold { margin-left: 3px; }
.fold.late { margin-left: 11px; margin-right: 1px; }
.corner { margin-left: auto; margin-right: 106px; }
.plot { overflow: visible; }
.dots path { stroke: #b8b8b8; stroke-width: 2; stroke-dasharray: 2 6.2; fill: none; }
.mini-dots path { stroke-dasharray: 2 4.2; }
.axis, .tick { stroke: #c0c0c0; stroke-width: 2; fill: none; }
.num { font-size: 25px; fill: #808080; }
.note { font-size: 25px; fill: #3a3a3a; }
.pointer { fill: none; stroke: #333; stroke-width: 2; }
.hollow { fill: #fcfcfc; stroke: #e24a4a; stroke-width: 2; }
.solid { fill: #389438; }
.timeline { height: 32px; display: flex; box-sizing: border-box; border-bottom: 2px solid #c0c0c0; }
.mode { flex: 1; border-left: 2px solid #c0c0c0; display: flex; align-items: center; justify-content: center; padding-right: 4px; }
.row { display: flex; box-sizing: border-box; border-bottom: 2px solid #c0c0c0; }
.tabs { height: 34px; padding-top: 1px; }
.extra { height: 36px; padding-top: 1px; }
.cell { box-sizing: border-box; border-right: 2px solid #c0c0c0; display: flex; align-items: center; justify-content: center; }
.tabs .cell:last-child, .extra .cell:last-child { border-right: 0; }
.grow { flex: 1; border-right: 2px solid #c0c0c0; }
.manual { width: 180px; }
.f10 { width: 98px; }
.blank { width: 100px; }
.pop { width: 78px; justify-content: flex-start; padding-left: 2px; }
.toggle { width: 62px; height: 28px; border-radius: 14px; background: #999; display: flex; align-items: center; }
.toggle i { width: 24px; height: 26px; border-radius: 50%; background: #dcdcdc; margin: 0 7px 0 1px; }
.info { width: 467px; box-sizing: border-box; border-right: 2px solid #999; display: flex; flex-direction: column; }
h1 { margin: 0; height: 56px; box-sizing: border-box; border-bottom: 2px solid #c0c0c0; display: flex; align-items: center; padding: 0 0 3px 71px; }
dl, dt, dd { margin: 0; }
.group { box-sizing: border-box; border-bottom: 2px solid #c0c0c0; }
.g1 { height: 159px; padding-top: 3px; }
.g2 { height: 498px; padding-top: 0; }
.stat { display: flex; height: 38.100px; padding: 0 6px 0 5px; align-items: center; }
dd { margin-left: auto; display: flex; }
.kind { height: 40px; box-sizing: border-box; border-bottom: 2px solid #c0c0c0; }
.tail { margin-left: auto; display: flex; align-items: center; gap: 4px; padding-right: 3px; }
.breadth { height: 44px; box-sizing: border-box; border-bottom: 2px solid #c0c0c0; padding: 0 0 2px 4px; }
.b1 { margin-left: 36px; }
.b2 { margin-left: 9px; }
.b3 { margin-left: 36px; }
.sub { height: 41px; box-sizing: border-box; display: flex; align-items: center; padding: 0 0 2px 4px; }
.mini { overflow: visible; }
.views { flex: 1; box-sizing: border-box; border-top: 2px solid #c0c0c0; border-bottom: 2px solid #c0c0c0; display: flex; padding-top: 1px; }
.views div { flex: 1; border-right: 2px solid #c0c0c0; display: flex; align-items: center; justify-content: center; }
.views div:last-child { border-right: 0; }
.status { grid-column: 1; grid-row: 3; box-sizing: border-box; border-top: 5px solid #e6e6e6; border-bottom: 2px solid #b0b8c0; border-right: 2px solid #999; background: #f0f0f0; display: flex; align-items: center; overflow: hidden; }
.quotes { display: flex; width: 1831px; flex: none; padding-top: 4px; }
.host { margin-left: 12px; padding-top: 4px; }
.search { margin-left: 496px; width: 200px; height: 30px; border-radius: 15px; background: #a8a8a8; display: flex; align-items: center; padding-left: 10px; box-sizing: border-box; }
.tray { margin-left: 11px; }
.rail { grid-column: 2; grid-row: 1 / 4; background: #f0f0f0; border-left: 4px solid #fafafa; border-bottom: 2px solid #b0b8c0; box-sizing: border-box; display: flex; flex-direction: column; padding-top: 2px; }
.btn { height: 46px; box-sizing: border-box; flex: none; display: flex; align-items: center; justify-content: center; padding-right: 3px; }
.btn.on { background: #f8f8f8; border-left: 2px solid #909090; border-top: 2px solid #909090; padding-right: 0; }
hr { width: 38px; height: 2px; flex: none; margin: 7px 2px; border: 0; border-top: 2px solid #a0a0a0; box-sizing: border-box; }
.marks { position: absolute; left: 27px; top: 46px; }
.call { font-family: "Liberation Serif", "Noto Sans CJK SC", serif; font-size: 31px; fill: #0000d8; }
.brand { position: absolute; left: 2959px; top: 14px; }
.brand text { font-family: "Noto Sans CJK SC", sans-serif; fill: #fff; stroke: #8a8a8a; stroke-width: 3; paint-order: stroke; }
.cursor { position: absolute; left: 121px; top: 19px; }
</style>
